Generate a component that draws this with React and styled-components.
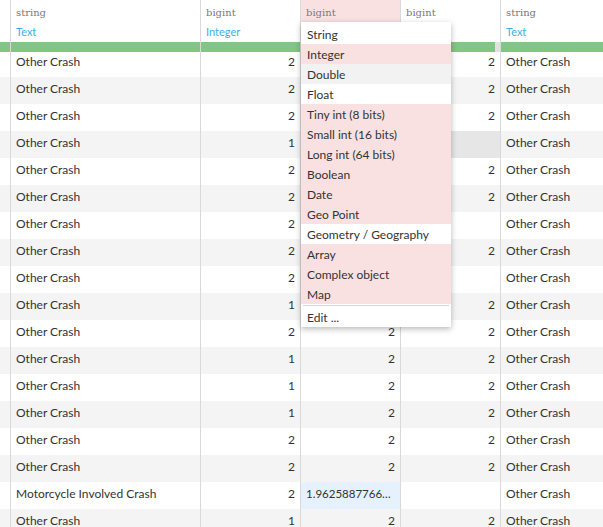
import React from "react";
import styled, { createGlobalStyle } from "styled-components";

const Global = createGlobalStyle`
  html, body { margin: 0; padding: 0; background: #fff; }
  body { font-family: "Lato", "Noto Sans", sans-serif; color: #333; overflow: hidden; }
`;

const COLS = "10px 190px 100px 100px 100px 103px";

const Page = styled.div`
  position: relative;
  width: 603px;
  height: 527px;
  overflow: hidden;
`;

const Header = styled.div`
  display: grid;
  grid-template-columns: ${COLS};
  height: 42px;
`;

const HeadCell = styled.div`
  border-left: ${(p) => (p.$first ? "none" : "1px solid #d9d9d9")};
  background: ${(p) => (p.$active ? "#f9e1e2" : "#fff")};
  padding: 6px 0 0 5px;
  box-sizing: border-box;
  overflow: hidden;
`;

const TypeLabel = styled.div`
  font-family: "DejaVu Serif", "Liberation Serif", serif;
  font-size: 10px;
  color: #7a7a7a;
  line-height: 14px;
  height: 17px;
`;

const Meaning = styled.div`
  font-family: "Lato", sans-serif;
  font-size: 11px;
  color: #3cb0e6;
  line-height: 18px;
`;

const BarRow = styled.div`
  display: grid;
  grid-template-columns: ${COLS};
  height: 10px;
`;

const BarCell = styled.div`
  border-left: ${(p) => (p.$first ? "none" : "1px solid #d9d9d9")};
  background: #e2e2e2;
  display: flex;
`;

const BarFill = styled.div`
  background: #80c684;
  height: 100%;
`;

const Row = styled.div`
  display: grid;
  grid-template-columns: ${COLS};
  height: ${(p) => (p.$first ? 25 : 27)}px;
  background: ${(p) => (p.$odd ? "#f4f4f4" : "#fff")};
`;

const Cell = styled.div`
  border-left: ${(p) => (p.$first ? "none" : "1px solid #d9d9d9")};
  box-sizing: border-box;
  padding: ${(p) => (p.$top ? "1px" : "3px")} 5px 0 5px;
  font-size: ${(p) => (p.$small ? "11.5px" : "12px")};
  line-height: ${(p) => (p.$small ? "18px" : "17px")};
  text-align: ${(p) => (p.$right ? "right" : "left")};
  white-space: nowrap;
  overflow: hidden;
  text-overflow: ellipsis;
  background: ${(p) => p.$bg || "transparent"};
  color: #333;
`;

const Menu = styled.div`
  position: absolute;
  left: 301px;
  top: 22px;
  width: 150px;
  background: #fff;
  box-shadow: 0 2px 6px rgba(0, 0, 0, 0.28);
  padding-top: 2px;
  font-size: 12px;
`;

const Item = styled.div`
  height: 20px;
  line-height: 22px;
  padding-left: 6px;
  color: #333;
  white-space: nowrap;
  background: ${(p) => (p.$tone === "pink" ? "#f9e1e2" : p.$tone === "grey" ? "#f2f2f2" : "#fff")};
`;

const Divider = styled.div`
  height: 1px;
  margin: 1px 2px 0 2px;
  background: #d6d6d6;
`;

const EditItem = styled(Item)`
  height: 20px;
  line-height: 23px;
  margin-bottom: 1px;
`;

const headers = [
  { type: "string", meaning: "Text" },
  { type: "bigint", meaning: "Integer" },
  { type: "bigint", meaning: "", active: true },
  { type: "bigint", meaning: "" },
  { type: "string", meaning: "Text" },
];

const bars = [100, 100, 100, 100, 95, 100];

const O = "Other Crash";
const rows = [
  [O, "2", "2", "2", O],
  [O, "2", "2", "2", O],
  [O, "2", "2", "2", O],
  [O, "1", "2", "", O],
  [O, "2", "2", "2", O],
  [O, "2", "2", "2", O],
  [O, "2", "2", "", O],
  [O, "2", "2", "2", O],
  [O, "2", "2", "", O],
  [O, "1", "2", "2", O],
  [O, "2", "2", "2", O],
  [O, "1", "2", "2", O],
  [O, "1", "2", "2", O],
  [O, "1", "2", "2", O],
  [O, "2", "2", "2", O],
  [O, "2", "2", "2", O],
  ["Motorcycle Involved Crash", "2", "1.9625887766123", "", O],
  [O, "1", "2", "2", O],
];

const menuItems = [
  ["String", "white"],
  ["Integer", "pink"],
  ["Double", "grey"],
  ["Float", "white"],
  ["Tiny int (8 bits)", "pink"],
  ["Small int (16 bits)", "pink"],
  ["Long int (64 bits)", "pink"],
  ["Boolean", "pink"],
  ["Date", "pink"],
  ["Geo Point", "pink"],
  ["Geometry / Geography", "white"],
  ["Array", "pink"],
  ["Complex object", "pink"],
  ["Map", "pink"],
];

export default function App() {
  return (
    <Page>
      <Global />
      <Header>
        <HeadCell $first />
        {headers.map((h, i) => (
          <HeadCell key={i} $active={h.active}>
            <TypeLabel>{h.type}</TypeLabel>
            <Meaning>{h.meaning}</Meaning>
          </HeadCell>
        ))}
      </Header>
      <BarRow>
        {bars.map((b, i) => (
          <BarCell key={i} $first={i === 0}>
            <BarFill style={{ width: `${b}%` }} />
          </BarCell>
        ))}
      </BarRow>
      {rows.map((r, i) => (
        <Row key={i} $odd={i % 2 === 1} $first={i === 0}>
          <Cell $first $top={i === 0} />
          <Cell $top={i === 0}>{r[0]}</Cell>
          <Cell $top={i === 0} $right>{r[1]}</Cell>
          {i === 16 ? (
            <Cell $small $bg="#e5f2fd">{r[2]}</Cell>
          ) : (
            <Cell $top={i === 0} $right>{r[2]}</Cell>
          )}
          <Cell $top={i === 0} $right $bg={i === 3 ? "#e6e6e6" : undefined}>
            {r[3]}
          </Cell>
          <Cell $top={i === 0}>{r[4]}</Cell>
        </Row>
      ))}
      <Menu>
        {menuItems.map(([label, tone]) => (
          <Item key={label} $tone={tone}>
            {label}
          </Item>
        ))}
        <Divider />
        <EditItem>Edit ...</EditItem>
      </Menu>
    </Page>
  );
}
